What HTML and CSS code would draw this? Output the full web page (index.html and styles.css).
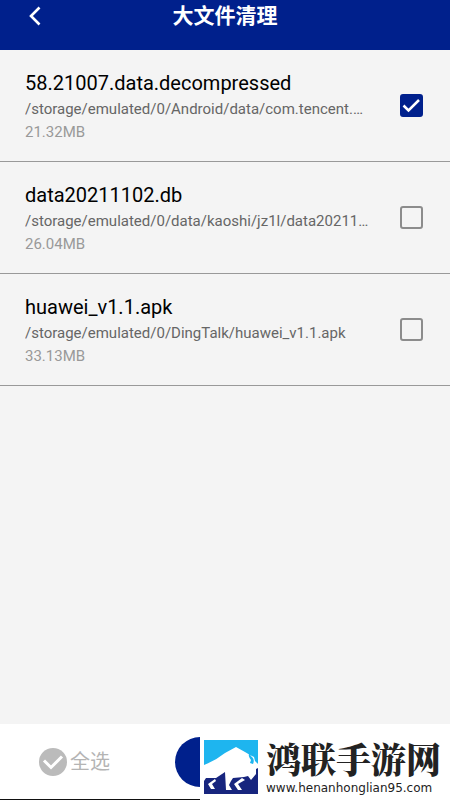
FILE: index.html
```html
<!DOCTYPE html>
<html lang="zh-CN">
<head>
<meta charset="utf-8">
<meta name="viewport" content="width=device-width, initial-scale=1">
<title>大文件清理</title>
<link rel="stylesheet" href="styles.css">
</head>
<body>
<header class="bar">
  <button class="back" type="button" aria-label="返回">
    <svg viewBox="0 0 12 20" width="12" height="20"><path d="M10.500 1.500 2 10l8.500 8.500" fill="none" stroke="currentColor" stroke-width="2.600"/></svg>
  </button>
  <h1 class="bar-title">大文件清理</h1>
</header>
<main class="files">
  <label class="file">
    <span class="info">
      <span class="name">58.21007.data.decompressed</span>
      <span class="path">/storage/emulated/0/Android/data/com.tencent.mm</span>
      <span class="size">21.32MB</span>
    </span>
    <input class="check" type="checkbox" checked>
  </label>
  <label class="file">
    <span class="info">
      <span class="name">data20211102.db</span>
      <span class="path">/storage/emulated/0/data/kaoshi/jz1l/data20211102.db</span>
      <span class="size">26.04MB</span>
    </span>
    <input class="check" type="checkbox">
  </label>
  <label class="file">
    <span class="info">
      <span class="name">huawei_v1.1.apk</span>
      <span class="path">/storage/emulated/0/DingTalk/huawei_v1.1.apk</span>
      <span class="size">33.13MB</span>
    </span>
    <input class="check" type="checkbox">
  </label>
</main>
<footer class="actions">
  <button class="select-all" type="button">
    <svg viewBox="0 0 28 28" width="28" height="28"><circle cx="14" cy="14" r="14" fill="#bbb"/><path d="M5 12.500l7 7L23 8.500" fill="none" stroke="#fff" stroke-width="3"/></svg>
    <span>全选</span>
  </button>
  <button class="clean" type="button" aria-label="清理"></button>
  <a class="mark" href="#">
    <svg class="mark-logo" viewBox="0 0 54 54" width="54" height="54">
      <path fill="#1eb5ef" d="M0 0h54v28H0z"/>
      <path fill="#17257e" d="M0 28h54v26H0z"/>
      <path fill="#fff" d="M0 25Q11 21 21 13L32 7l9 5 5 3 4 2 1 4 3 3v4l-2 1v5l-5 6-3-4-4 1-11 1-2 3-2 4 3 5h-6l-1-18-9 6H2l-2 3z"/>
      <path fill="#fff" d="M11 39l-7 5 3 5h4l-3-5 4-3zM38 38l-8 6 4 6h4l-4-6 7-4z"/>
      <path fill="#1eb5ef" d="M47 11q-2 4 1 6 3 3 1 7l-3-1 1-3q-3-4-2-6z"/>
    </svg>
    <span class="mark-text">
      <span class="mark-name">鸿联手游网</span>
      <span class="mark-url">www.henanhonglian95.com</span>
    </span>
  </a>
</footer>
</body>
</html>
```
FILE: styles.css
```css
* { box-sizing: border-box; }
body {
  margin: 0;
  min-height: 100vh;
  display: flex;
  flex-direction: column;
  background: #f4f4f4;
  font-family: Roboto, "Noto Sans CJK SC", sans-serif;
}
button { margin: 0; padding: 0; border: 0; background: none; font: inherit; }
.bar {
  display: grid;
  grid-template-columns: 72px 1fr 72px;
  height: 50px;
  padding-bottom: 20px;
  background: #00208c;
  color: #fff;
}
.back { display: flex; align-items: center; padding-left: 29px; color: #fff; }
.bar-title { margin: 0; font-size: 21px; line-height: 32px; font-weight: 700; text-align: center; }
.files { flex: 1; }
.file {
  display: flex;
  align-items: center;
  gap: 24px;
  height: 112px;
  padding: 0 27px 0 25px;
  border-bottom: 1px solid #999;
}
.info { flex: 1; min-width: 0; display: flex; flex-direction: column; }
.name { font-size: 20px; line-height: 28px; color: #000; }
.path { font-size: 15px; line-height: 24px; color: #666; overflow: hidden; text-overflow: ellipsis; white-space: nowrap; }
.size { font-size: 15px; line-height: 22px; color: #999; }
.check {
  appearance: none;
  flex: none;
  width: 23px;
  height: 23px;
  margin: 0;
  border: 2px solid #8c8c8c;
  border-radius: 3px;
}
.check:checked {
  border-color: #00208c;
  background: #00208c url("data:image/svg+xml,%3Csvg xmlns='http://www.w3.org/2000/svg' viewBox='0 0 19 19'%3E%3Cpath d='M1.500 9.500l5 5L17 4' fill='none' stroke='white' stroke-width='2.500'/%3E%3C/svg%3E") center / 19px no-repeat;
}
.actions {
  position: relative;
  display: flex;
  align-items: center;
  height: 76px;
  padding: 0 39px;
  background: #fff;
  border-bottom: 1px solid #111;
}
.select-all { display: flex; align-items: center; gap: 3px; font-size: 20px; line-height: 28px; color: #b4b4b4; }
.clean { flex: 1; height: 50px; margin-left: 65px; border-radius: 25px; background: #00208c; }
.mark {
  position: absolute;
  right: 0;
  bottom: -1px;
  display: flex;
  align-items: center;
  gap: 8px;
  width: 250px;
  height: 66px;
  padding-left: 4px;
  background: #fff;
  color: #222;
  text-decoration: none;
}
.mark-logo { flex: none; }
.mark-text { display: flex; flex-direction: column; padding-top: 2px; }
.mark-name { font: 900 35px/40px "Noto Serif CJK SC", "Noto Sans CJK SC", serif; }
.mark-url { font: 12px/20px "DejaVu Sans", sans-serif; }
```
